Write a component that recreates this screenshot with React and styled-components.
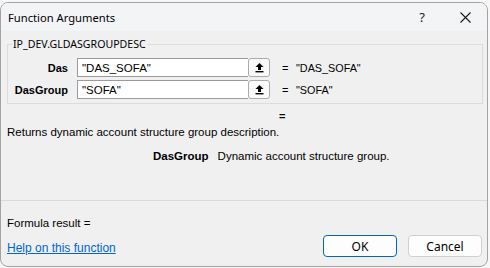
import React from 'react';
import styled, { createGlobalStyle } from 'styled-components';

const GlobalStyle = createGlobalStyle`
	html, body {
		margin: 0;
		padding: 0;
		background: #f7f7f7;
	}
	body {
		font-family: 'Liberation Sans', Arial, sans-serif;
		font-size: 11px;
		color: #000;
	}
`;

const args = [
	{ name: 'Das', value: '"DAS_SOFA"' },
	{ name: 'DasGroup', value: '"SOFA"' },
];

const UploadIcon = () => (
	<svg width="11" height="11" viewBox="0 0 11 11">
		<path d="M5.5 1 L9.5 5 L7 5 L7 8 L4 8 L4 5 L1.5 5 Z" fill="#000" />
		<rect x="1.5" y="9" width="8" height="1.4" fill="#000" />
	</svg>
);

const CloseIcon = () => (
	<svg width="11" height="11" viewBox="0 0 11 11">
		<path d="M0.5 0.5 L10.5 10.5 M10.5 0.5 L0.5 10.5" stroke="#1a1a1a" strokeWidth="1.1" />
	</svg>
);

const App = () => {
	return (
		<>
			<GlobalStyle />
			<Window>
				<TitleBar>
					<Title>Function Arguments</Title>
					<TitleButtons>
						<HelpMark>?</HelpMark>
						<CloseIcon />
					</TitleButtons>
				</TitleBar>
				<Body>
					<Group>
						<Legend>IP_DEV.GLDASGROUPDESC</Legend>
						{args.map((a) => (
							<ArgRow key={a.name}>
								<ArgLabel>{a.name}</ArgLabel>
								<InputBox>{a.value}</InputBox>
								<RefButton>
									<UploadIcon />
								</RefButton>
								<Equals>=</Equals>
								<ArgValue>{a.value}</ArgValue>
							</ArgRow>
						))}
					</Group>
					<ResultEq>=</ResultEq>
					<Description>Returns dynamic account structure group description.</Description>
					<ParamHelp>
						<strong>DasGroup</strong>
						<span>Dynamic account structure group.</span>
					</ParamHelp>
				</Body>
				<Footer>
					<FormulaResult>Formula result =</FormulaResult>
					<FooterRow>
						<HelpLink href="#">Help on this function</HelpLink>
						<Buttons>
							<DialogButton $primary>OK</DialogButton>
							<DialogButton>Cancel</DialogButton>
						</Buttons>
					</FooterRow>
				</Footer>
			</Window>
		</>
	);
};

const Window = styled.div`
	box-sizing: border-box;
	width: 488px;
	height: 265px;
	margin-top: 2px;
	border: 1px solid #a3a3a3;
	border-radius: 8px;
	background: #f0f0f0;
	overflow: hidden;
	display: flex;
	flex-direction: column;
`;

const TitleBar = styled.div`
	height: 28px;
	background: #f3f4f6;
	display: flex;
	align-items: center;
	justify-content: space-between;
	padding: 0 16px 0 7px;
	flex-shrink: 0;
`;

const Title = styled.span`
	font-family: 'Noto Sans', sans-serif;
	font-size: 11.2px;
`;

const TitleButtons = styled.div`
	display: flex;
	align-items: center;
	gap: 35px;
`;

const HelpMark = styled.span`
	font-family: 'Noto Sans', sans-serif;
	font-size: 13px;
	color: #1a1a1a;
`;

const Body = styled.div`
	padding: 0 4px 0 6px;
	flex: 1;
	display: flex;
	flex-direction: column;
`;

const Group = styled.fieldset`
	margin: 6px 0 0 0;
	padding: 0 0 4px 0;
	border: 1px solid #dcdcdc;
	display: flex;
	flex-direction: column;
	gap: 3px;
	min-width: 0;
`;

const Legend = styled.legend`
	font-family: 'Noto Sans', sans-serif;
	font-size: 10.6px;
	line-height: 14px;
	padding: 0 1px;
	margin-left: 4px;
	margin-bottom: 7px;
`;

const ArgRow = styled.div`
	display: flex;
	align-items: center;
	height: 19px;
`;

const ArgLabel = styled.span`
	width: 60px;
	text-align: right;
	font-weight: bold;
	margin-right: 9px;
`;

const InputBox = styled.div`
	box-sizing: border-box;
	width: 171px;
	height: 19px;
	background: #fff;
	border: 1px solid #9b9b9b;
	border-right: none;
	padding: 0 4px;
	display: flex;
	align-items: center;
	font-size: 11.5px;
`;

const RefButton = styled.div`
	box-sizing: border-box;
	width: 22px;
	height: 19px;
	background: #fafafa;
	border: 1px solid #ababab;
	border-radius: 3px;
	display: flex;
	align-items: center;
	justify-content: center;
`;

const Equals = styled.span`
	margin-left: 12px;
	width: 7px;
`;

const ArgValue = styled.span`
	margin-left: 7px;
	font-size: 10.8px;
`;

const ResultEq = styled.div`
	margin: 5px 0 0 272px;
	line-height: 14px;
	font-weight: bold;
`;

const Description = styled.div`
	margin-top: 2px;
	line-height: 14px;
	font-size: 11.5px;
`;

const ParamHelp = styled.div`
	margin: 10px 0 0 146px;
	line-height: 14px;
	font-size: 11.5px;
	display: flex;
	gap: 9px;
`;

const Footer = styled.div`
	border-top: 1px solid #dadada;
	margin-top: auto;
	height: 66px;
	padding: 15px 5px 0 6px;
	box-sizing: border-box;
`;

const FormulaResult = styled.div`
	line-height: 14px;
	font-size: 11.5px;
`;

const FooterRow = styled.div`
	display: flex;
	align-items: center;
	justify-content: space-between;
	margin-top: 5px;
`;

const HelpLink = styled.a`
	font-size: 12px;
	color: #0066cc;
	text-decoration: underline;
	margin-top: 3px;
`;

const Buttons = styled.div`
	display: flex;
	gap: 11px;
`;

const DialogButton = styled.button`
	box-sizing: border-box;
	width: 74px;
	height: 22px;
	font-family: 'Noto Sans', sans-serif;
	font-size: 12px;
	color: #000;
	background: #fdfdfd;
	border: 1px solid ${(p) => (p.$primary ? '#0067c0' : '#d0d0d0')};
	border-radius: 4px;
	padding: 0;
`;

export default App;
